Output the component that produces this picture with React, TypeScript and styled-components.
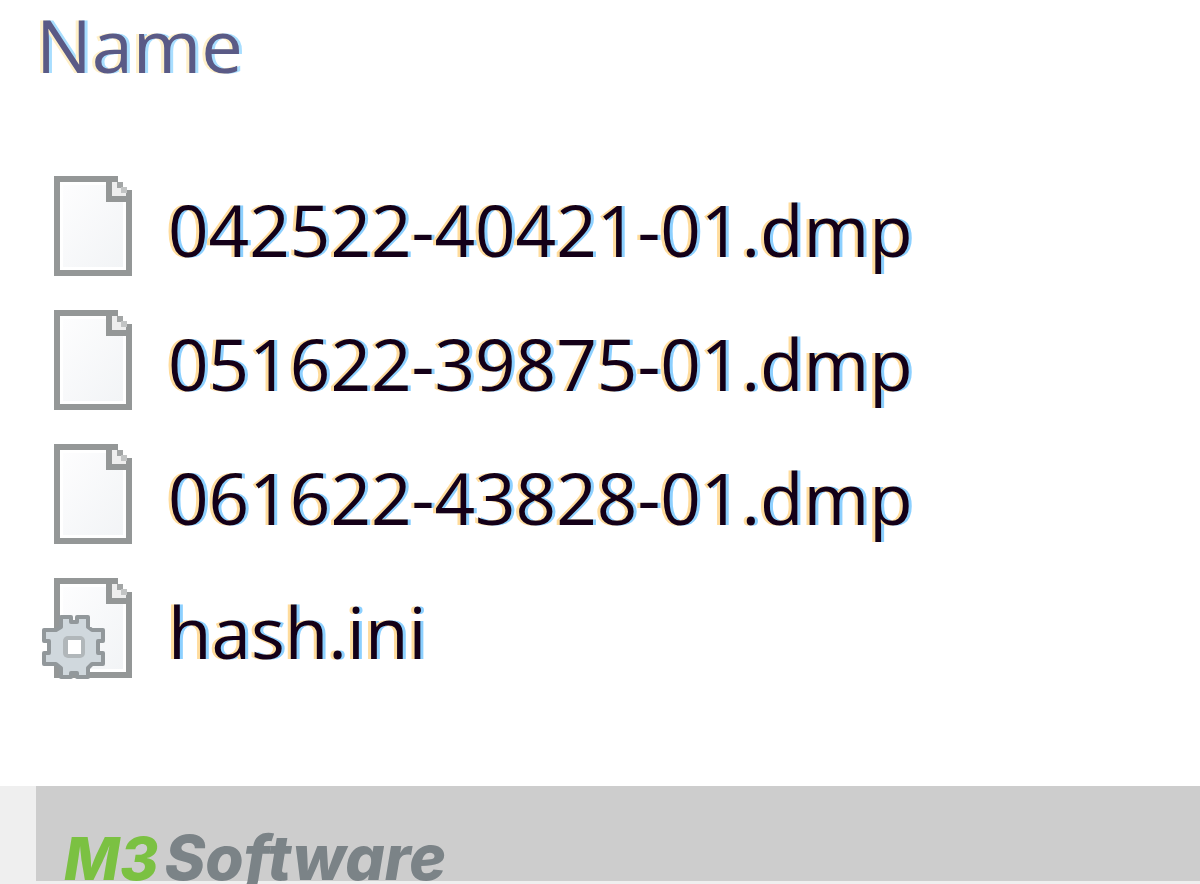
import React from "react";
import styled, { createGlobalStyle } from "styled-components";

const GlobalStyle = createGlobalStyle`
  body { margin: 0; background: #fff; }
`;

const Page = styled.main`
  display: flex;
  flex-direction: column;
  min-height: 100vh;
  font-family: "Open Sans", "Noto Sans", sans-serif;
`;

const FileTable = styled.table`
  width: 100%;
  border-collapse: collapse;
`;

const NameHeader = styled.th`
  height: 159px;
  padding: 7px 0 0 36px;
  box-sizing: border-box;
  vertical-align: top;
  text-align: left;
  font-size: 74px;
  font-weight: 400;
  line-height: 76px;
  color: #5a5a86;
  text-shadow: -3px 0 #fff0c8, 3px 0 #a8deff;
`;

const FileCell = styled.td`
  height: 134px;
  padding: 0 0 0 38px;
`;

const FileEntry = styled.div`
  display: flex;
  align-items: center;
  gap: 34px;
`;

const FileName = styled.span`
  padding-top: 8px;
  font-size: 71px;
  line-height: 92px;
  white-space: nowrap;
  color: #140018;
  text-shadow: -3px 0 #ffdc9c, 3px 0 #8cd0ff;
`;

const Footer = styled.footer`
  display: grid;
  grid-template-columns: 36px 1fr;
  margin-top: auto;
  padding-bottom: 3px;
  background: #efefef;
`;

const Band = styled.div`
  grid-column: 2;
  height: 95px;
  padding: 48px 0 0 28px;
  box-sizing: border-box;
  background: #cdcdcd;
`;

const Brand = styled.div`
  display: flex;
  align-items: baseline;
  gap: 6px;
  font-family: Inter, sans-serif;
  font-size: 62px;
  font-style: italic;
  font-weight: 800;
  line-height: 48px;
  color: #7b8387;
`;

const BrandMark = styled.span`
  font-size: 59px;
  color: #7bc142;
`;

const Icon = styled.svg`
  display: block;
  flex: none;
`;

function FileIcon({ gear }: { gear?: boolean }) {
  return (
    <Icon width="96" height="104" viewBox="0 0 96 104" aria-hidden="true">
      <defs>
        <linearGradient id="paper" x1="0" y1="0" x2="1" y2="1">
          <stop offset="0" stopColor="#fdfdfe" />
          <stop offset="1" stopColor="#f2f4f6" />
        </linearGradient>
      </defs>
      <path d="M19 5H79L91 17V99H19Z" fill="#fff" />
      <rect x="25" y="11" width="60" height="82" fill="url(#paper)" />
      <path d="M80 5H19V99H91V16" fill="none" stroke="#949797" strokeWidth="6" />
      <path d="M71 5V25H91" fill="none" stroke="#949797" strokeWidth="6" />
      <path d="M74 8H79L88 17V22H74Z" fill="#eeeeee" />
      <rect x="79" y="8" width="6" height="6" fill="#a3a6a6" />
      <rect x="83" y="13" width="6" height="6" fill="#c2c4c4" />
      {gear && (
        <g>
          <path
            d="M23 41H33V46H39V41H50V51L54 54H65V65H60V77H65V88H54L50 92V101H39V97H33V101H23V92L18 88H6V77H11V65H6V54H18L23 51Z"
            fill="#d0d8dd"
            stroke="#92989b"
            strokeWidth="4"
            strokeLinejoin="round"
          />
          <rect x="25" y="60" width="22" height="22" rx="5" fill="#b1b7ba" />
          <rect x="30" y="64" width="13" height="14" fill="#fff" />
        </g>
      )}
    </Icon>
  );
}

const files = ["042522-40421-01.dmp", "051622-39875-01.dmp", "061622-43828-01.dmp", "hash.ini"];

export default function App() {
  return (
    <>
      <GlobalStyle />
      <Page>
        <FileTable>
          <thead>
            <tr>
              <NameHeader scope="col">Name</NameHeader>
            </tr>
          </thead>
          <tbody>
            {files.map((name) => (
              <tr key={name}>
                <FileCell>
                  <FileEntry>
                    <FileIcon gear={name.endsWith(".ini")} />
                    <FileName>{name}</FileName>
                  </FileEntry>
                </FileCell>
              </tr>
            ))}
          </tbody>
        </FileTable>
        <Footer>
          <Band>
            <Brand>
              <BrandMark>M3</BrandMark>
              <span>Software</span>
            </Brand>
          </Band>
        </Footer>
      </Page>
    </>
  );
}
